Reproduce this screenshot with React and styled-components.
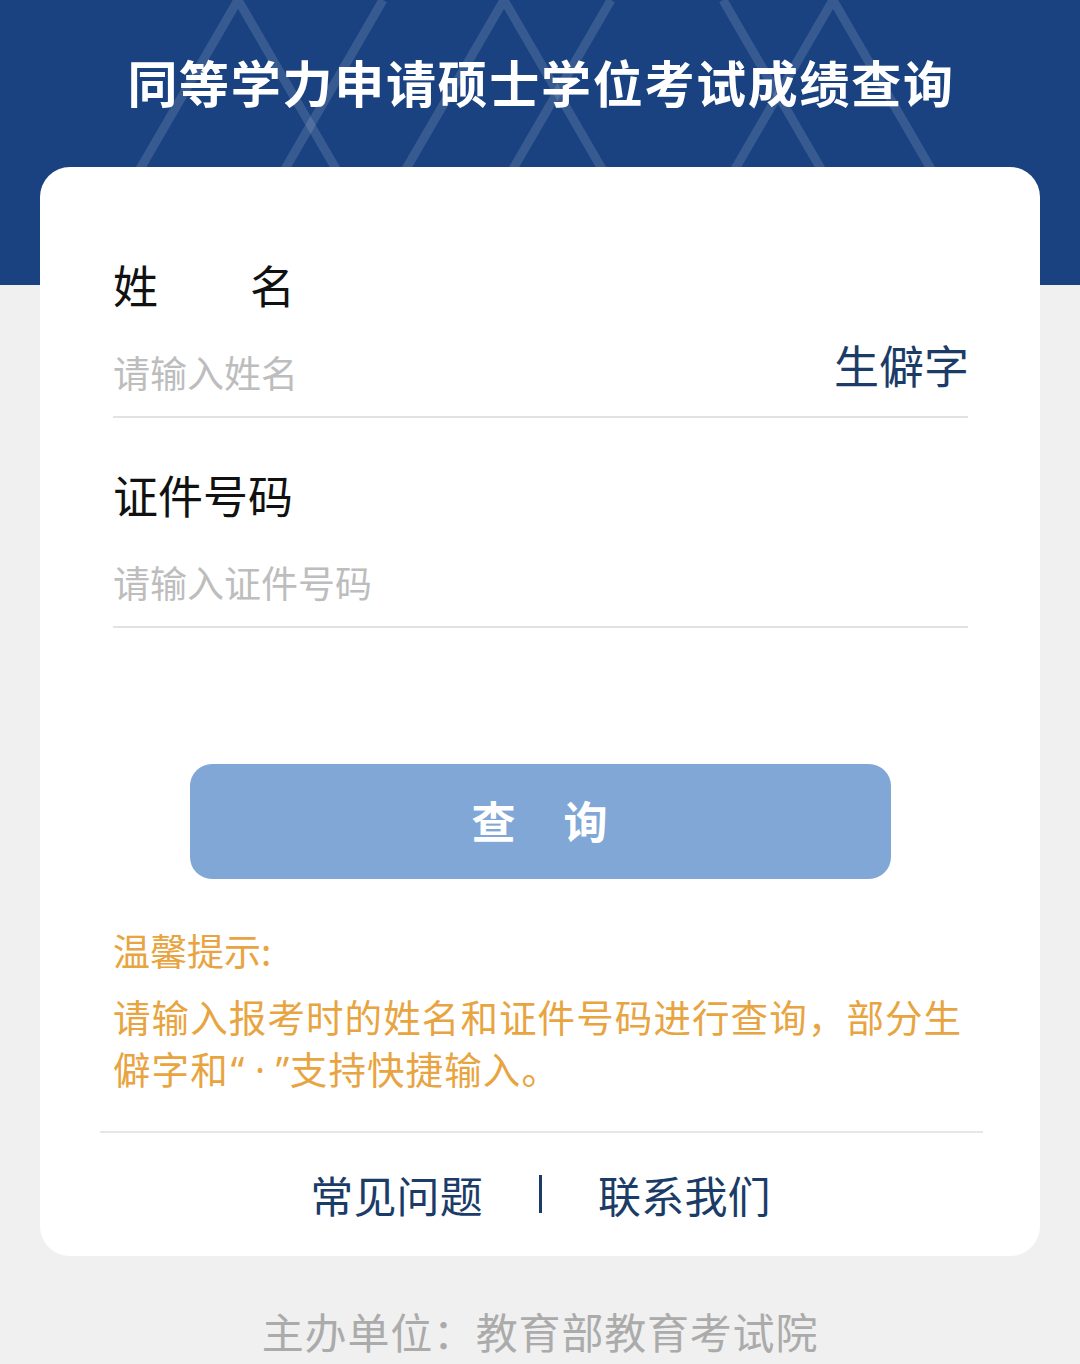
import React from "react";
import styled, { createGlobalStyle } from "styled-components";

const GlobalStyle = createGlobalStyle`
  html, body {
    margin: 0;
    padding: 0;
    background: #f0f0f0;
  }
  body {
    font-family: "Noto Sans CJK SC", "Noto Sans", sans-serif;
  }
  * {
    box-sizing: border-box;
  }
`;

const Page = styled.div`
  width: 1080px;
  min-height: 1364px;
  background: #f0f0f0;
  overflow: hidden;
`;

const Header = styled.header`
  position: relative;
  height: 285px;
  background: #1a4281;
  padding-top: 50px;
  overflow: hidden;
`;

const Pattern = styled.svg`
  position: absolute;
  left: 0;
  top: 0;
  width: 1080px;
  height: 285px;
  pointer-events: none;
`;

const Title = styled.h1`
  position: relative;
  margin: 0;
  padding-left: 2px;
  text-align: center;
  color: #fff;
  font-size: 50px;
  font-weight: 700;
  line-height: 62px;
  letter-spacing: 1.7px;
`;

const Card = styled.main`
  position: relative;
  margin: -118px 40px 0;
  padding: 88px 72px 32px 73px;
  background: #fff;
  border-radius: 30px;
`;

const Label = styled.div`
  width: ${(p) => (p.$justify ? "182px" : "auto")};
  font-size: 45px;
  line-height: 60px;
  color: #111;
  text-align: justify;
  text-align-last: ${(p) => (p.$justify ? "justify" : "left")};
  margin-top: ${(p) => p.$top || 0}px;
`;

const InputRow = styled.div`
  display: flex;
  align-items: center;
  height: 88px;
  margin-top: 15px;
  border-bottom: 2px solid #e2e2e2;
  padding-bottom: 2px;
`;

const Input = styled.input`
  flex: 1;
  min-width: 0;
  border: none;
  outline: none;
  background: transparent;
  padding: 0;
  font-family: inherit;
  font-size: 37px;
  line-height: 50px;
  color: #333;
  &::placeholder {
    color: #bdbdbd;
  }
`;

const RareChar = styled.span`
  font-size: 45px;
  line-height: 50px;
  color: #1c3c68;
  margin-top: -14px;
  margin-right: -1px;
`;

const QueryButton = styled.button`
  display: block;
  width: 701px;
  height: 115px;
  margin: 136px auto 0;
  border: none;
  border-radius: 22px;
  background: #80a7d6;
  color: #fff;
  font-family: inherit;
  font-size: 44px;
  font-weight: 700;
  letter-spacing: 48px;
  padding-left: 52px;
  padding-bottom: 4px;
  cursor: pointer;
`;

const Tip = styled.div`
  margin-top: 45px;
  color: #e8a440;
`;

const TipTitle = styled.div`
  font-size: 37px;
  line-height: 52px;
`;

const TipBody = styled.p`
  margin: 14px 0 0;
  font-size: 37.5px;
  line-height: 52px;
  letter-spacing: 1.1px;
`;

const Quote = styled.span`
  font-family: "Noto Sans", sans-serif;
  letter-spacing: 0.5px;
  margin-left: 2px;
`;

const Divider = styled.hr`
  margin: 35px -15px 0 -13px;
  border: none;
  border-top: 2px solid #e6e6e6;
`;

const Links = styled.nav`
  display: flex;
  justify-content: center;
  align-items: center;
  margin-top: 31px;
  font-size: 43px;
  line-height: 60px;
  color: #1c3c68;
`;

const LinkText = styled.span`
  letter-spacing: 0.2px;
`;

const Sep = styled.span`
  width: 3px;
  height: 38px;
  background: #1c3c68;
  margin: 0 56px;
`;

const Footer = styled.footer`
  margin-top: 45px;
  text-align: center;
  font-size: 42px;
  line-height: 60px;
  color: #ababab;
  letter-spacing: 0.8px;
`;

const slope = 0.58;
const lambda = (x) =>
  `M${x - slope * 300} 300 L${x} 0 L${x + slope * 300} 300`;
const slash = (x) => `M${x} 0 L${x - slope * 300} 300`;
const backslash = (x) => `M${x} 0 L${x + slope * 300} 300`;

const lines = [
  lambda(238),
  slash(383),
  lambda(504),
  slash(611),
  backslash(723),
  lambda(833),
];

const App = () => (
  <Page>
    <GlobalStyle />
    <Header>
      <Pattern viewBox="0 0 1080 285">
        {lines.map((d) => (
          <path
            key={d}
            d={d}
            fill="none"
            stroke="rgba(255,255,255,0.13)"
            strokeWidth="9"
          />
        ))}
      </Pattern>
      <Title>同等学力申请硕士学位考试成绩查询</Title>
    </Header>
    <Card>
      <Label $justify>姓名</Label>
      <InputRow>
        <Input placeholder="请输入姓名" />
        <RareChar>生僻字</RareChar>
      </InputRow>
      <Label $top={47}>证件号码</Label>
      <InputRow>
        <Input placeholder="请输入证件号码" />
      </InputRow>
      <QueryButton>查询</QueryButton>
      <Tip>
        <TipTitle>温馨提示:</TipTitle>
        <TipBody>
          请输入报考时的姓名和证件号码进行查询，部分生僻字和
          <Quote>“ · ”</Quote>
          支持快捷输入。
        </TipBody>
      </Tip>
      <Divider />
      <Links>
        <LinkText>常见问题</LinkText>
        <Sep />
        <LinkText>联系我们</LinkText>
      </Links>
    </Card>
    <Footer>主办单位：教育部教育考试院</Footer>
  </Page>
);

export default App;
